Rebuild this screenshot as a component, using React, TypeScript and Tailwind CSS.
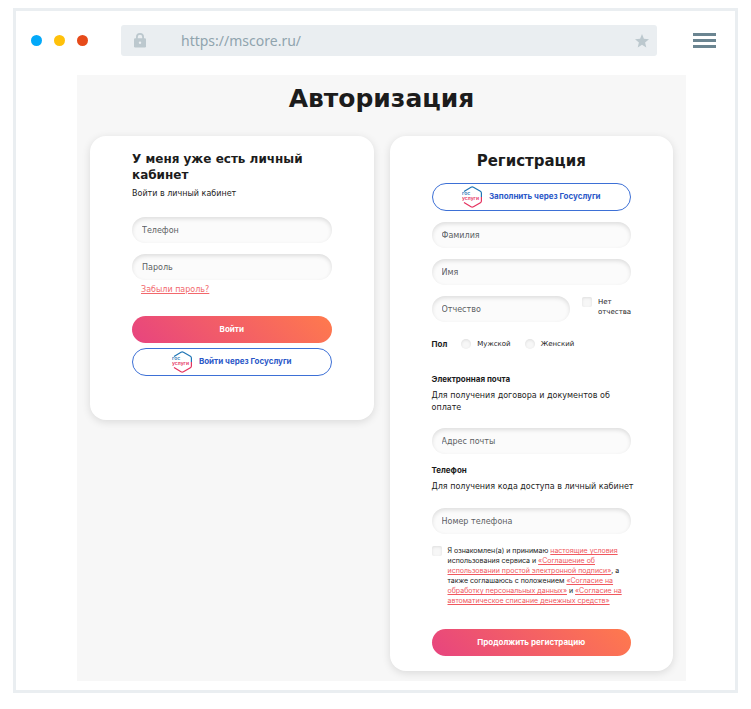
import type { InputHTMLAttributes, ReactNode } from "react";
import clsx from "clsx";

const FIELD_SHADOW = "shadow-[inset_0_2px_4px_rgba(0,0,0,0.12)]";

export default function App() {
  return (
    <div className="bg-white px-[13px] pt-2 pb-4 font-['DejaVu_Sans',sans-serif] text-[#1c1c1c]">
      <div className="border-[3px] border-[#eaeef1] bg-white pb-[9px]">
        <BrowserBar />
        <main className="mr-[49px] ml-[61px] bg-[#f7f7f7] px-[13px] pb-[10px]">
          <h1 className="pt-2 pb-[21px] text-center text-[25px] leading-8 font-bold">Авторизация</h1>
          <div className="grid grid-cols-2 items-start gap-4">
            <LoginCard />
            <RegisterCard />
          </div>
        </main>
      </div>
    </div>
  );
}

function BrowserBar() {
  return (
    <header className="flex items-center pt-[14px] pr-[19px] pb-[19px] pl-[15px]">
      <div className="flex gap-3">
        <span className="size-[11px] rounded-full bg-[#03a9f9]" />
        <span className="size-[11px] rounded-full bg-[#ffc10a]" />
        <span className="size-[11px] rounded-full bg-[#e64a19]" />
      </div>
      <div className="mr-9 ml-[33px] flex h-[31px] min-w-0 flex-1 items-center rounded-[3px] bg-[#eaeef1] pr-2 pl-[13px] text-[#bcc8ce]">
        <svg viewBox="0 0 12 15" className="h-[15px] w-3 shrink-0" aria-hidden="true">
          <path d="M2.9 6V4a3.1 3.1 0 0 1 6.2 0v2" fill="none" stroke="currentColor" strokeWidth="1.8" />
          <rect y="5.3" width="12" height="9.2" rx="1.2" fill="currentColor" />
          <circle cx="6" cy="9.8" r="1.2" fill="#eaeef1" />
        </svg>
        <input
          aria-label="Адрес сайта"
          type="text"
          defaultValue="https://mscore.ru/"
          className="ml-[35px] min-w-0 flex-1 bg-transparent font-['Noto_Sans',sans-serif] text-[14px] leading-5 text-[#90a4ae] outline-none"
        />
        <button type="button" aria-label="Добавить в закладки">
          <svg viewBox="0 0 14 14" className="size-[14px]" fill="currentColor" aria-hidden="true">
            <path d="M7 0l1.9 4.8 5.1.4-3.9 3.3 1.2 5L7 10.8l-4.3 2.7 1.2-5L0 5.2l5.1-.4z" />
          </svg>
        </button>
      </div>
      <button type="button" aria-label="Меню" className="flex w-[23px] flex-col gap-[3px]">
        <span className="h-[3px] bg-[#6b8591]" />
        <span className="h-[3px] bg-[#6b8591]" />
        <span className="h-[3px] bg-[#6b8591]" />
      </button>
    </header>
  );
}

function Card({ className, children }: { className?: string; children: ReactNode }) {
  return (
    <form
      className={clsx(
        "rounded-2xl bg-white px-[42px] shadow-[0_2px_8px_rgba(0,0,0,0.12)]",
        className,
      )}
      onSubmit={(e) => e.preventDefault()}
    >
      {children}
    </form>
  );
}

function LoginCard() {
  return (
    <Card className="pt-[15px] pb-11">
      <h2 className="text-[12px] leading-4 font-bold">У меня уже есть личный кабинет</h2>
      <p className="mt-[5px] text-[8px] leading-3">Войти в личный кабинет</p>
      <Field label="Телефон" type="tel" className="mt-[17px]" />
      <Field label="Пароль" type="password" className="mt-[11px]" />
      <a href="#" className="mt-1 ml-[9px] block text-[8px] leading-3 text-[#f2686c] underline">
        Забыли пароль?
      </a>
      <GradientButton className="mt-5">Войти</GradientButton>
      <GosuslugiButton className="mt-[5px]">Войти через Госуслуги</GosuslugiButton>
    </Card>
  );
}

function RegisterCard() {
  return (
    <Card className="pt-[15px] pb-[15px]">
      <h2 className="text-center text-[15px] leading-5 font-bold">Регистрация</h2>
      <GosuslugiButton className="mt-3">Заполнить через Госуслуги</GosuslugiButton>
      <Field label="Фамилия" className="mt-[11px]" />
      <Field label="Имя" className="mt-[11px]" />
      <div className="mt-[11px] flex items-start">
        <Field label="Отчество" className="min-w-0 flex-1" />
        <label className="mt-px ml-3 flex items-start gap-[6px] text-[7px] leading-[10px]">
          <Choice type="checkbox" name="noPatronymic" />
          <span className="w-[33px]">Нет отчества</span>
        </label>
      </div>

      <fieldset className="mt-4 flex items-center text-[7px] leading-3">
        <legend className="float-left font-['Inter',sans-serif] text-[8px] font-bold">Пол</legend>
        <label className="ml-[14px] flex items-center gap-[6px]">
          <Choice type="radio" name="gender" />
          Мужской
        </label>
        <label className="ml-[14px] flex items-center gap-[6px]">
          <Choice type="radio" name="gender" />
          Женский
        </label>
      </fieldset>

      <h3 className="mt-[23px] font-['Inter',sans-serif] text-[8px] leading-3 font-bold">Электронная почта</h3>
      <p className="mt-[5px] text-[8px] leading-3">Для получения договора и документов об оплате</p>
      <Field label="Адрес почты" type="email" className="mt-[14px]" />

      <h3 className="mt-[10px] font-['Inter',sans-serif] text-[8px] leading-3 font-bold">Телефон</h3>
      <p className="mt-[5px] text-[8px] leading-3 whitespace-nowrap">Для получения кода доступа в личный кабинет</p>
      <Field label="Номер телефона" type="tel" className="mt-[15px]" />

      <div className="mt-3 flex items-start gap-[6px] font-['Inter',sans-serif] text-[7px] leading-[10px]">
        <Choice type="checkbox" name="agree" id="agree" />
        <label htmlFor="agree">
          Я ознакомлен(а) и принимаю <TermsLink>настоящие условия</TermsLink> использования сервиса и{" "}
          <TermsLink>«Соглашение об использовании простой электронной подписи»</TermsLink>, а также
          соглашаюсь с положением <TermsLink>«Согласие на обработку персональных данных»</TermsLink> и{" "}
          <TermsLink>«Согласие на автоматическое списание денежных средств»</TermsLink>
        </label>
      </div>
      <GradientButton className="mt-[23px]">Продолжить регистрацию</GradientButton>
    </Card>
  );
}

function Field({
  label,
  type = "text",
  className,
}: {
  label: string;
  type?: string;
  className?: string;
}) {
  return (
    <div className={className}>
      <input
        type={type}
        aria-label={label}
        placeholder={label}
        className={clsx(
          "block h-[26px] w-full rounded-full bg-[#fbfbfb] px-[10px] text-[8px] outline-none placeholder:text-[#5b5f63]",
          FIELD_SHADOW,
        )}
      />
    </div>
  );
}

function Choice(props: InputHTMLAttributes<HTMLInputElement>) {
  return (
    <input
      {...props}
      className={clsx(
        "size-[10px] shrink-0 appearance-none bg-[#f7f7f7] checked:bg-[#f2686c]",
        "shadow-[inset_0_1px_3px_rgba(0,0,0,0.1)]",
        props.type === "radio" ? "rounded-full" : "rounded-[2px]",
      )}
    />
  );
}

function TermsLink({ children }: { children: ReactNode }) {
  return (
    <a href="#" className="text-[#f0585e] underline">
      {children}
    </a>
  );
}

function GradientButton({ className, children }: { className?: string; children: ReactNode }) {
  return (
    <button
      type="submit"
      className={clsx(
        "block h-[27px] w-full rounded-full bg-[linear-gradient(45deg,#e7447f,#ff7a4d)] pb-[2px] font-['Inter',sans-serif] text-[8px] font-bold text-white",
        className,
      )}
    >
      {children}
    </button>
  );
}

function GosuslugiButton({ className, children }: { className?: string; children: ReactNode }) {
  return (
    <button
      type="button"
      className={clsx(
        "flex h-7 w-full items-center justify-center gap-[6px] rounded-full border border-[#3d70d6] bg-white font-['Inter',sans-serif] text-[8px] font-bold text-[#2b58c8]",
        className,
      )}
    >
      <GosuslugiLogo />
      <span className="pb-[2px]">{children}</span>
    </button>
  );
}

function GosuslugiLogo() {
  return (
    <svg viewBox="0 0 21 22" className="h-[22px] w-[21px] shrink-0" aria-hidden="true">
      <g fill="none" strokeWidth="1.2" strokeLinejoin="round">
        <path d="M2 5.4L9 1.2q1.2-.7 2.4 0l7 4q1 .6 1 1.8V11" stroke="#1f75b5" />
        <path d="M19.4 11v4q0 1.2-1 1.8l-7 4q-1.2.7-2.4 0L2 16.6" stroke="#e5325f" />
      </g>
      <g fontSize="5" fontWeight="600">
        <text x="0" y="9.4" fill="#1f75b5">гос</text>
        <text x="0" y="14.2" fill="#e5325f">услуги</text>
      </g>
    </svg>
  );
}
